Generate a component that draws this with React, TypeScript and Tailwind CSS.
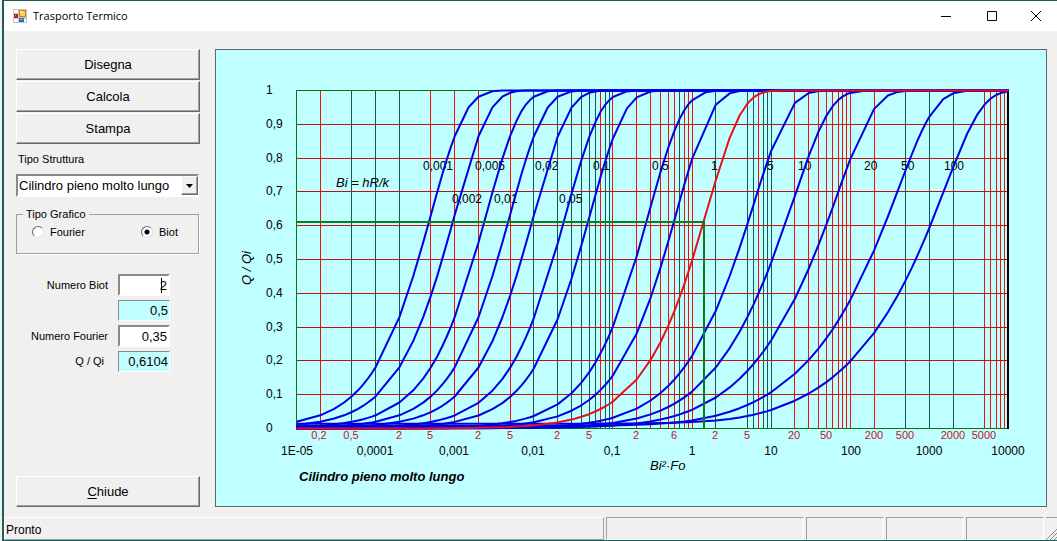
import { useState } from "react";

const PLOT = { left: 296, right: 1008, top: 90, bottom: 428 };
const DECADE = 79.1;

const redLines = [
    320, 430, 454, 478, 510, 600, 612, 636, 650, 660, 668, 674, 684, 688, 692, 758, 794, 808, 818, 826, 832, 838,
    842, 846, 850, 874, 984, 990, 996, 1000, 1004,
];
const darkLines = [
    351, 375, 399, 533, 557, 571, 581, 589, 595, 605, 609, 679, 715, 747, 753, 763, 767, 771, 905, 929, 953,
];
const rows = [124, 158, 191, 225, 259, 293, 327, 360, 394];

const yLabels: [string, number][] = [
    ["1", 94], ["0,9", 128], ["0,8", 162], ["0,7", 195], ["0,6", 229], ["0,5", 263],
    ["0,4", 297], ["0,3", 331], ["0,2", 364], ["0,1", 398], ["0", 432],
];
const xLabels: [string, number][] = [
    ["1E-05", 297], ["0,0001", 375], ["0,001", 454], ["0,01", 533], ["0,1", 612],
    ["1", 692], ["10", 771], ["100", 851], ["1000", 929], ["10000", 1008],
];
const minorLabels: [string, number][] = [
    ["0,2", 319], ["0,5", 351], ["2", 399], ["5", 430], ["2", 478], ["5", 510], ["2", 557], ["5", 589],
    ["2", 636], ["6", 674], ["2", 715], ["5", 747], ["20", 794], ["50", 826], ["200", 874], ["500", 905],
    ["2000", 953], ["5000", 984],
];
const curveLabels: [string, number, number][] = [
    ["0,001", 423, 170], ["0,005", 475, 170], ["0,02", 535, 170], ["0,1", 593, 170], ["0,5", 652, 170],
    ["1", 711, 170], ["5", 767, 170], ["10", 798, 170], ["20", 864, 170], ["50", 901, 170], ["100", 944, 170],
    ["0,002", 452, 203], ["0,01", 494, 203], ["0,05", 559, 203],
];

// Bessel function of the first kind, integral form
function bessel(n: number, x: number) {
    const steps = 100;
    let sum = 0;
    for (let i = 0; i < steps; i++) {
        const t = ((i + 0.5) * Math.PI) / steps;
        sum += Math.cos(n * t - x * Math.sin(t));
    }
    return sum / steps;
}

// roots of z J1(z) = Bi J0(z)
function findRoots(bi: number, count: number) {
    const f = (z: number) => z * bessel(1, z) - bi * bessel(0, z);
    const roots: number[] = [];
    let low = 0;
    for (let n = 1; n <= count; n++) {
        const b = (n - 0.25) * Math.PI;
        const high = b + 1 / (8 * b);
        let a = low;
        let c = high;
        const sign = n % 2 === 1 ? 1 : -1;
        for (let k = 0; k < 36; k++) {
            const m = (a + c) / 2;
            if (f(m) * sign > 0) c = m;
            else a = m;
        }
        roots.push((a + c) / 2);
        low = high;
    }
    return roots;
}

// heat released by a long cylinder, drawn against Bi² Fo
function curvePath(bi: number) {
    const roots = findRoots(bi, 14);
    const heat = (x: number) => {
        const fo = x / (bi * bi);
        return 1 - roots.reduce((s, z) => s + ((4 * bi * bi) / (z * z * (z * z + bi * bi))) * Math.exp(-z * z * fo), 0);
    };
    const points: string[] = [];
    const add = (x: number) => {
        const px = PLOT.left + 0.5 + DECADE * (Math.log10(x) + 5);
        const py = PLOT.bottom + 0.5 - heat(x) * 338;
        points.push(`${px.toFixed(1)} ${py.toFixed(1)}`);
    };
    for (let d = -5; d < 4; d++) {
        for (let m = 1; m < 10; m++) {
            const x = m * 10 ** d;
            add(x);
            if (m === 1 && heat(x) > 0.84) add(x * 1.5);
        }
    }
    add(10000);
    return "M" + points.join("L");
}

const curves = [0.001, 0.002, 0.005, 0.01, 0.02, 0.05, 0.1, 0.5, 1, 5, 10, 20, 50, 100].map(curvePath);
const selectedCurve = curvePath(2);

function Chart() {
    return (
        <svg viewBox="216 50 830 456" className="block w-full" fontFamily="'Liberation Sans', Arial, sans-serif" fontSize="12">
            <g shapeRendering="crispEdges" fill="none">
                {darkLines.map((x) => (
                    <path key={x} d={`M${x + 0.5} ${PLOT.top}V${PLOT.bottom}`} stroke="#0f5a5a" />
                ))}
                {redLines.map((x) => (
                    <path key={x} d={`M${x + 0.5} ${PLOT.top}V${PLOT.bottom}`} stroke="#f01008" />
                ))}
                {rows.map((y) => (
                    <path key={y} d={`M${PLOT.left} ${y + 0.5}H${PLOT.right}`} stroke="#c01010" />
                ))}
                <path d="M296.5 428.5V90.5H1008M296 428.5H1008" stroke="#007a10" />
                <path d="M1008 90V429" stroke="#000" strokeWidth="2" />
            </g>
            {curveLabels.map(([text, x, y]) => (
                <text key={text} x={x} y={y}>{text}</text>
            ))}
            <text x="336" y="187" fontSize="13" fontStyle="italic">Bi = hR/k</text>
            <g fill="none" strokeWidth="2" strokeLinejoin="round">
                {curves.map((d) => (
                    <path key={d} d={d} stroke="#0000e4" />
                ))}
                <path d={selectedCurve} stroke="#e81018" />
                <path d="M296 222H704V428" stroke="#0c7c1c" />
            </g>
            {yLabels.map(([text, y]) => (
                <text key={text} x="266" y={y}>{text}</text>
            ))}
            <g textAnchor="middle">
                {xLabels.map(([text, x]) => (
                    <text key={text} x={x} y="455">{text}</text>
                ))}
            </g>
            <g textAnchor="middle" fill="#c4102c" fontSize="11">
                {minorLabels.map(([text, x]) => (
                    <text key={x} x={x} y="439">{text}</text>
                ))}
            </g>
            <g fontSize="13" fontStyle="italic">
                <text x="650" y="470">Bi²·Fo</text>
                <text transform="translate(251 285) rotate(-90)">Q / Qi</text>
                <text x="299" y="481" fontWeight="bold">Cilindro pieno molto lungo</text>
            </g>
        </svg>
    );
}

function PushButton({ children }: { children: React.ReactNode }) {
    return (
        <button
            type="button"
            className="h-[31px] w-full border border-t-white border-l-white border-r-[#696969] border-b-[#696969] bg-[#f0f0f0] text-[13px] shadow-[inset_-1px_-1px_0_#a0a0a0]"
        >
            {children}
        </button>
    );
}

function Radio({ label, checked, onChange }: { label: string; checked: boolean; onChange: () => void }) {
    return (
        <label className="flex items-center gap-[6px]">
            <input
                type="radio"
                name="grafico"
                checked={checked}
                onChange={onChange}
                className="size-3 appearance-none rounded-full border border-t-[#696969] border-l-[#696969] border-r-[#e3e3e3] border-b-[#e3e3e3] bg-white checked:bg-[radial-gradient(circle,#000_2px,#fff_3px)]"
            />
            {label}
        </label>
    );
}

const fieldStyle = "w-[52px] px-px text-right text-[13px] outline-none border-b-white border-r-white border-t-[#8a8a8a] border-l-[#8a8a8a]";
const statusPanel = "border border-t-[#a0a0a0] border-l-[#a0a0a0] border-r-white border-b-white";

export default function App() {
    const [grafico, setGrafico] = useState("Biot");
    const [biot, setBiot] = useState("2");
    const [fourier, setFourier] = useState("0,35");

    return (
        <div className="flex min-h-screen flex-col bg-[#f0f0f0] pl-[2px] font-['Liberation_Sans',Arial,sans-serif] text-black">
            <div className="flex flex-1 flex-col border-t border-b border-l-2 border-[#1f5c5a]">
                <header className="flex h-[30px] items-center bg-white pl-[9px]">
                    <svg viewBox="0 0 14 14" className="size-[14px]">
                        <rect width="14" height="14" fill="#c4c8cc" />
                        <rect x="1" y="1" width="4" height="3" fill="#fff" />
                        <rect x="1" y="10" width="4" height="3" fill="#fff" />
                        <rect x="11" y="10" width="2" height="3" fill="#fff" />
                        <rect x="1" y="5" width="4" height="4" fill="#c82020" />
                        <rect x="2" y="6" width="1" height="1" fill="#f08070" />
                        <rect x="6" y="1" width="7" height="7" fill="#b88810" />
                        <rect x="7" y="2" width="5" height="5" fill="#f8d050" />
                        <rect x="7" y="2" width="3" height="2" fill="#ffe890" />
                        <rect x="6" y="9" width="5" height="4" fill="#3868c0" />
                        <rect x="7" y="10" width="3" height="1" fill="#80a8e8" />
                    </svg>
                    <h1 className="ml-[6px] flex-1 font-['Open_Sans','Noto_Sans',sans-serif] text-[11px]">Trasporto Termico</h1>
                    <button type="button" aria-label="Riduci a icona" className="flex h-full w-[46px] items-center justify-center">
                        <svg viewBox="0 0 10 10" className="size-[10px]"><path d="M0 5.5H10" stroke="#000" /></svg>
                    </button>
                    <button type="button" aria-label="Ingrandisci" className="flex h-full w-[46px] items-center justify-center">
                        <svg viewBox="0 0 10 10" className="size-[10px]"><path d="M.5.5h9v9h-9z" fill="none" stroke="#000" /></svg>
                    </button>
                    <button type="button" aria-label="Chiudi" className="flex h-full w-[42px] items-center justify-center">
                        <svg viewBox="0 0 10 10" className="size-[10px]"><path d="M0 0L10 10M10 0L0 10" stroke="#000" /></svg>
                    </button>
                </header>

                <div className="flex flex-1 gap-[15px] pt-[18px] pr-[10px] pb-[10px] pl-3">
                    <aside className="flex w-[184px] shrink-0 flex-col text-[11px]">
                        <div className="flex flex-col gap-px">
                            <PushButton>Disegna</PushButton>
                            <PushButton>Calcola</PushButton>
                            <PushButton>Stampa</PushButton>
                        </div>

                        <label htmlFor="struttura" className="mt-2 ml-[2px] leading-[14px]">Tipo Struttura</label>
                        <div className="relative mt-2 mr-px">
                            <select
                                id="struttura"
                                className="block h-[23px] w-full appearance-none border-2 border-t-[#8a8a8a] border-l-[#8a8a8a] border-r-white border-b-white bg-white pl-px text-[13px] outline-none"
                            >
                                <option>Cilindro pieno molto lungo</option>
                            </select>
                            <span className="pointer-events-none absolute inset-y-[2px] right-[1px] flex w-[17px] items-center justify-center border border-t-white border-l-white border-r-[#696969] border-b-[#696969] bg-[#f0f0f0] shadow-[inset_-1px_-1px_0_#a0a0a0]">
                                <svg viewBox="0 0 7 4" className="h-1 w-[7px]"><path d="M0 0H7L3.5 4z" /></svg>
                            </span>
                        </div>

                        <fieldset className="mt-[11px] mr-px h-[46px] border border-[#a0a0a0] pl-[6px] shadow-[1px_1px_0_#fff]">
                            <legend className="px-[3px] leading-3">Tipo Grafico</legend>
                            <div className="mt-[5px] flex justify-between pr-5 pl-[9px] leading-[14px]">
                                <Radio label="Fourier" checked={grafico === "Fourier"} onChange={() => setGrafico("Fourier")} />
                                <Radio label="Biot" checked={grafico === "Biot"} onChange={() => setGrafico("Biot")} />
                            </div>
                        </fieldset>

                        <div className="mt-5 grid grid-cols-[92px_52px] items-center gap-x-[10px] gap-y-1 text-right">
                            <label htmlFor="biot">Numero Biot</label>
                            <div className="relative">
                                <input id="biot" value={biot} onChange={(e) => setBiot(e.target.value)} className={`${fieldStyle} block h-[22px] border-2 bg-white`} />
                                <span className="absolute top-1 right-2 h-[15px] w-px bg-black" />
                            </div>
                            <input aria-label="1/Bi" readOnly value="0,5" className={`${fieldStyle} col-start-2 h-[21px] border bg-[#c0ffff]`} />
                            <label htmlFor="fourier">Numero Fourier</label>
                            <input id="fourier" value={fourier} onChange={(e) => setFourier(e.target.value)} className={`${fieldStyle} h-[22px] border-2 bg-white`} />
                            <label htmlFor="qqi" className="pr-1">Q / Qi</label>
                            <input id="qqi" readOnly value="0,6104" className={`${fieldStyle} h-[21px] border bg-[#c0ffff]`} />
                        </div>

                        <div className="mt-auto">
                            <PushButton><u className="underline-offset-2">C</u>hiude</PushButton>
                        </div>
                    </aside>

                    <main className="min-w-0 flex-1 border border-[#606868] bg-[#c0ffff]">
                        <Chart />
                    </main>
                </div>

                <footer className="flex h-[23px] gap-[2px] text-[12px]">
                    <div className="flex-1 border border-t-white border-l-white border-r-[#a0a0a0] border-b-[#a0a0a0] pl-px leading-6">Pronto</div>
                    <div className={`w-[198px] ${statusPanel}`} />
                    <div className={`w-[78px] ${statusPanel}`} />
                    <div className={`w-[78px] ${statusPanel}`} />
                    <div className={`w-[78px] ${statusPanel}`} />
                    <div className="flex w-[11px] items-end border-t border-[#a0a0a0]">
                        <svg viewBox="0 0 11 12" className="h-3 w-[11px]"><path d="M0 12L12 0M4 12L12 4M8 12L12 8" stroke="#8c8c8c" /></svg>
                    </div>
                </footer>
            </div>
        </div>
    );
}
